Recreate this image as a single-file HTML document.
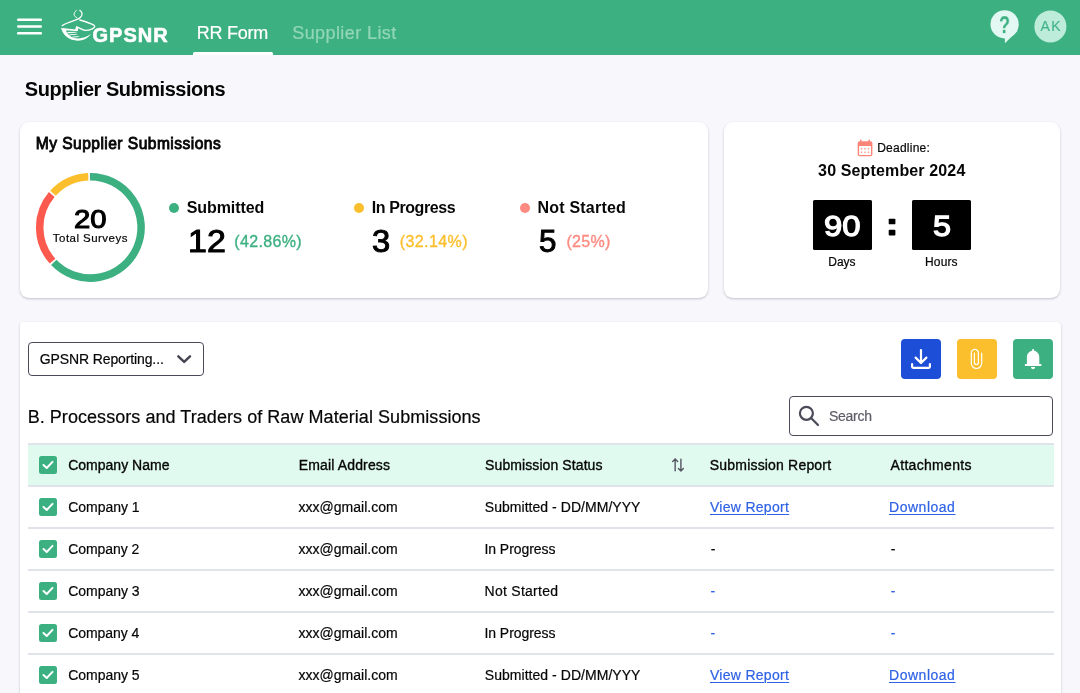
<!DOCTYPE html>
<html lang="en">
<head>
<meta charset="utf-8">
<title>Supplier Submissions</title>
<style>
*{box-sizing:border-box;margin:0;padding:0}
html,body{width:1080px;height:693px;overflow:hidden}
body{background:#F8F8FC;font-family:"Liberation Sans",sans-serif;color:#111;position:relative}
.abs{position:absolute}
#hdr{position:absolute;left:0;top:0;width:1080px;height:55px;background:#3DB081}
.card{position:absolute;background:#fff;border-radius:9px;box-shadow:0 1px 3px rgba(50,50,90,.16),0 1px 2px rgba(50,50,90,.12)}
.t{position:absolute;white-space:nowrap;line-height:1;-webkit-text-stroke:.2px currentColor}
.b{-webkit-text-stroke:0}
#tx{position:absolute;left:0;top:0;width:1080px;height:693px;will-change:transform}
svg text{will-change:transform}
.b{font-weight:bold}
.sb{-webkit-text-stroke:.35px currentColor}
.s10{-webkit-text-stroke:1px currentColor}
.s06{-webkit-text-stroke:.6px currentColor}
.s05{-webkit-text-stroke:.5px currentColor}
.xb{font-weight:bold;-webkit-text-stroke:.6px currentColor}
.lnk{text-decoration:underline;text-decoration-thickness:1px;text-underline-offset:2px}
.dot{position:absolute;width:10px;height:10px;border-radius:50%}
.hl{position:absolute;left:28px;width:1026px;height:2px;background:#E1E3EA}
.cb{position:absolute;left:39px;width:18px;height:18px}
.btn{position:absolute;top:339px;width:40px;height:40px;border-radius:4px}
</style>
</head>
<body>
<!-- HEADER -->
<div id="hdr"></div>
<svg class="abs" style="left:17px;top:18px" width="25" height="17" viewBox="0 0 25 17"><g fill="#fff"><rect x="0" y="0.4" width="25" height="2.5" rx="1.2"/><rect x="0" y="7.2" width="25" height="2.5" rx="1.2"/><rect x="0" y="14.1" width="25" height="2.5" rx="1.2"/></g></svg>
<svg class="abs" style="left:56px;top:5px" width="50" height="45" viewBox="0 0 50 45">
  <defs><linearGradient id="fg" x1="0" x2="1" y1="0" y2="0"><stop offset="0" stop-color="#fff"/><stop offset=".7" stop-color="#fff" stop-opacity=".85"/><stop offset="1" stop-color="#fff" stop-opacity=".15"/></linearGradient></defs>
  <g fill="none" stroke="#fff" stroke-linecap="round" stroke-linejoin="round">
    <path d="M20.4 5.4C18.6 6.8 17.6 8.6 18.3 10.3C18.8 11.5 19.8 12.3 20.8 12.8" stroke-width=".9"/>
    <path d="M23.8 5.3C25.6 6.6 26.6 8.6 25.6 10.8C24.8 12.4 23.5 13.3 22.3 13.9C20.5 14.8 14 16.9 11.4 18C9.5 18.8 7.5 19.8 6.2 20.6" stroke-width="1.25"/>
    <path d="M23.8 15C27 15.7 33 17.8 36.5 19.3C39.6 20.7 39.4 22.4 36.3 23.8C34 24.9 31 25.4 28.8 25.4" stroke-width="1.4"/>
  </g>
  <path d="M5.1 23.1C10 23.5 15 24.1 19.2 24.5L20.2 21C23 21.7 25.5 23.7 28.8 24.7L29 26C26.2 25.6 24 24.2 22 23.2L22 26C18 25.7 13 25.5 9.9 25.4C11.5 29 15 33.4 22.3 33.4C26.5 33.4 31.2 31.8 35 29.1C32 33.4 27 35.7 21.9 35.7C13 35.7 7 30.5 5.1 23.1Z" fill="#fff"/>
  <g fill="none" stroke="url(#fg)">
    <path d="M11.5 27.6L21.6 27.3" stroke-width="1.15"/>
    <path d="M13.6 29.8L22 29.3" stroke-width="1.05"/>
    <path d="M16.5 32L23.8 31.5" stroke-width="1"/>
  </g>
</svg>

<div class="abs" style="left:193px;top:52px;width:80px;height:3px;background:#fff;border-radius:1.5px 1.5px 0 0"></div>
<!-- help bubble -->
<svg class="abs" style="left:988px;top:8px;will-change:transform" width="80" height="38" viewBox="988 8 80 38">
  <circle cx="1050.4" cy="26.4" r="16" fill="#BEECDB"/>
  <circle cx="1004.6" cy="24.3" r="14.1" fill="#E3F8F2"/>
  <path d="M1004.9 36v7.3l13-12.8z" fill="#E3F8F2"/>
  <text transform="translate(1004.6 33.1) scale(.77 1)" text-anchor="middle" font-family="Liberation Sans, sans-serif" font-weight="bold" font-size="23.5" fill="#3DB081">?</text>
</svg>


<!-- CARDS -->
<div class="card" style="left:20px;top:122px;width:688px;height:176px"></div>
<div class="card" style="left:724px;top:122px;width:336px;height:176px"></div>
<div class="card" style="left:20px;top:322px;width:1041px;height:400px;border-radius:4px"></div>

<!-- donut -->
<svg class="abs" style="left:30px;top:167px" width="120" height="120" viewBox="30 167 120 120"><g fill="none" stroke-width="7.5"><path d="M90 176.7A50.7 50.7 0 1 1 53.75 262.43" stroke="#3DB081"/><path d="M52.55 261.13A50.7 50.7 0 0 1 51.79 194.54" stroke="#FC5A4E"/><path d="M52.96 193.21A50.7 50.7 0 0 1 88.28 176.74" stroke="#FBBF2D"/></g></svg>

<div class="dot" style="left:169px;top:203px;background:#3DB081"></div>
<div class="dot" style="left:354px;top:203px;background:#FBBF2D"></div>
<div class="dot" style="left:520px;top:203px;background:#FD8A80"></div>

<!-- calendar -->
<svg class="abs" style="left:856px;top:138px" width="18" height="20" viewBox="856 138 18 20">
  <g fill="#FC8478">
    <rect x="857.7" y="141.3" width="14.7" height="14.9" rx="2"/>
    <rect x="860" y="139.4" width="1.5" height="3.5" rx=".7"/>
    <rect x="868.5" y="139.4" width="1.5" height="3.5" rx=".7"/>
  </g>
  <rect x="859.1" y="146.1" width="11.9" height="8.9" rx=".6" fill="#fff"/>
  <g fill="#FC8478">
    <rect x="860.9" y="148.1" width="1.3" height="1.3"/><rect x="864.35" y="148.1" width="1.3" height="1.3"/><rect x="867.8" y="148.1" width="1.3" height="1.3"/>
    <rect x="860.9" y="151.6" width="1.3" height="1.3"/><rect x="864.35" y="151.6" width="1.3" height="1.3"/><rect x="867.8" y="151.6" width="1.3" height="1.3"/>
  </g>
</svg>
<div class="abs" style="left:813.2px;top:200px;width:58.8px;height:50px;background:#000;border-radius:1.5px"></div>
<div class="abs" style="left:912px;top:200px;width:58.8px;height:50px;background:#000;border-radius:1.5px"></div>
<svg class="abs" style="left:886px;top:216px" width="12" height="22" viewBox="886 216 12 22"><rect x="888.7" y="218.7" width="6.7" height="5.6" rx=".9" fill="#000"/><rect x="888.7" y="229.8" width="6.7" height="5.6" rx=".9" fill="#000"/></svg>

<!-- select -->
<div class="abs" style="left:28px;top:342px;width:176px;height:34px;border:1px solid #4A4A5A;border-radius:4px;background:#fff"></div>
<svg class="abs" style="left:175px;top:352px" width="18" height="14" viewBox="175 352 18 14"><path d="M178.3 356.3l5.85 5.6 5.85-5.6" fill="none" stroke="#44444F" stroke-width="2.4" stroke-linecap="round" stroke-linejoin="round"/></svg>

<!-- buttons -->
<div class="btn" style="left:901px;background:#1D4ED8"></div>
<div class="btn" style="left:957px;background:#FBBF2D"></div>
<div class="btn" style="left:1013px;background:#3DB081"></div>
<svg class="abs" style="left:901px;top:339px" width="152" height="40" viewBox="901 339 152 40">
  <g fill="none" stroke="#fff" stroke-linecap="round" stroke-linejoin="round">
    <path d="M921 350v12.3M915.6 357.6l5.4 5.4 5.4-5.4M912.1 364v2.8a1 1 0 0 0 1 1h15.8a1 1 0 0 0 1-1V364" stroke-width="2.2"/>
    <path d="M981.7 353.2V363.3A5.2 5.2 0 0 1 971.3 363.3V353A3.55 3.55 0 0 1 978.4 353V362.5A2 2 0 0 1 974.4 362.5V353.2" stroke-width="1.2"/>
  </g>
  <g fill="#fff">
    <path d="M1033.1 349a1 1 0 0 1 1 1v.7c3 .6 5.2 3.1 5.2 6.3v7.1h-12.4v-7.1c0-3.2 2.2-5.7 5.2-6.3v-.7a1 1 0 0 1 1-1z"/>
    <rect x="1024.9" y="364.1" width="16.4" height="1.9" rx=".3"/>
    <path d="M1030.9 367.1h4.3a2.15 2.15 0 0 1-4.3 0z"/>
  </g>
</svg>

<!-- search -->
<div class="abs" style="left:789px;top:396px;width:264px;height:40px;border:1px solid #4A4A5A;border-radius:4px;background:#fff"></div>
<svg class="abs" style="left:797px;top:404px" width="24" height="24" viewBox="797 404 24 24"><g fill="none" stroke="#4A4A58" stroke-width="2.2" stroke-linecap="round"><circle cx="806.4" cy="413.3" r="6.5"/><path d="M811.3 418.3l6.7 6.7"/></g></svg>

<!-- table -->
<div class="abs" style="left:28px;top:445px;width:1026px;height:40px;background:#E0FAF0"></div>
<div class="hl" style="top:443px"></div>
<div class="hl" style="top:485px"></div>
<div class="hl" style="top:527px"></div>
<div class="hl" style="top:569px"></div>
<div class="hl" style="top:611px"></div>
<div class="hl" style="top:653px"></div>
<svg class="abs" style="left:670px;top:456px" width="18" height="18" viewBox="670 456 18 18"><path d="M675.15 470.8V459M672.7 461.4l2.45-2.5 2.45 2.5M680.9 459.2V471M678.45 468.6l2.45 2.5 2.45-2.5" fill="none" stroke="#555561" stroke-width="1.4" stroke-linecap="round" stroke-linejoin="round"/></svg>
<svg class="cb" style="top:456px" viewBox="0 0 18 18"><rect width="18" height="18" rx="2.5" fill="#3DB081"/><path d="M4.5 9l3.2 3 5.8-6.1" fill="none" stroke="#fff" stroke-width="2" stroke-linecap="round" stroke-linejoin="round"/></svg>
<svg class="cb" style="top:498px" viewBox="0 0 18 18"><rect width="18" height="18" rx="2.5" fill="#3DB081"/><path d="M4.5 9l3.2 3 5.8-6.1" fill="none" stroke="#fff" stroke-width="2" stroke-linecap="round" stroke-linejoin="round"/></svg>
<svg class="cb" style="top:540px" viewBox="0 0 18 18"><rect width="18" height="18" rx="2.5" fill="#3DB081"/><path d="M4.5 9l3.2 3 5.8-6.1" fill="none" stroke="#fff" stroke-width="2" stroke-linecap="round" stroke-linejoin="round"/></svg>
<svg class="cb" style="top:582px" viewBox="0 0 18 18"><rect width="18" height="18" rx="2.5" fill="#3DB081"/><path d="M4.5 9l3.2 3 5.8-6.1" fill="none" stroke="#fff" stroke-width="2" stroke-linecap="round" stroke-linejoin="round"/></svg>
<svg class="cb" style="top:624px" viewBox="0 0 18 18"><rect width="18" height="18" rx="2.5" fill="#3DB081"/><path d="M4.5 9l3.2 3 5.8-6.1" fill="none" stroke="#fff" stroke-width="2" stroke-linecap="round" stroke-linejoin="round"/></svg>
<svg class="cb" style="top:666px" viewBox="0 0 18 18"><rect width="18" height="18" rx="2.5" fill="#3DB081"/><path d="M4.5 9l3.2 3 5.8-6.1" fill="none" stroke="#fff" stroke-width="2" stroke-linecap="round" stroke-linejoin="round"/></svg>

<div id="tx">
<div class="t xb" id="gpsnr" style="left:92.48px;top:25.01px;font-size:20px;color:#fff;letter-spacing:1.01px;">GPSNR</div>
<div class="t" id="rrform" style="left:196.64px;top:24.01px;font-size:18px;color:#fff;letter-spacing:-0.224px;">RR Form</div>
<div class="t" id="suplist" style="left:292.22px;top:24.01px;font-size:18px;color:#93D6B9;letter-spacing:0.415px;">Supplier List</div>
<div class="t" id="ak" style="left:1040.6px;top:19.01px;font-size:14px;color:#45B488;letter-spacing:1.286px;">AK</div>
<div class="t b" id="title" style="left:24.84px;top:79px;font-size:20px;color:#060606;letter-spacing:-0.491px;">Supplier Submissions</div>
<div class="t" id="mysup" style="left:35.7px;top:136.01px;font-size:15.6px;color:#060606;letter-spacing:0.454px;-webkit-text-stroke:.85px currentColor;">My Supplier Submissions</div>
<div class="t" id="n20" style="left:74.46px;top:206px;font-size:26px;color:#000;transform-origin:0 0;transform:scaleX(1.1263);-webkit-text-stroke:1.1px currentColor;">20</div>
<div class="t" id="totsur" style="left:52.83px;top:233.01px;font-size:11.5px;color:#060606;letter-spacing:0.462px;">Total Surveys</div>
<div class="t b" id="lsub" style="left:186.64px;top:200px;font-size:16px;color:#060606;letter-spacing:-0.058px;">Submitted</div>
<div class="t s10" id="n12" style="left:187.66px;top:226.01px;font-size:31.5px;color:#000;transform-origin:0 0;transform:scaleX(1.0796);">12</div>
<div class="t" id="p12" style="left:234.26px;top:234.01px;font-size:16px;color:#3DB081;letter-spacing:0.351px;-webkit-text-stroke:.35px currentColor;">(42.86%)</div>
<div class="t b" id="linp" style="left:371.81px;top:200px;font-size:16px;color:#060606;letter-spacing:-0.418px;">In Progress</div>
<div class="t s10" id="n3" style="left:371.99px;top:226.01px;font-size:31.5px;color:#000;transform-origin:0 0;transform:scaleX(1.0397);">3</div>
<div class="t" id="p3" style="left:399.7px;top:234.01px;font-size:16px;color:#FBBF2D;letter-spacing:0.414px;-webkit-text-stroke:.35px currentColor;">(32.14%)</div>
<div class="t b" id="lnot" style="left:537.55px;top:200px;font-size:16px;color:#060606;letter-spacing:0.203px;">Not Started</div>
<div class="t s10" id="n5" style="left:538.74px;top:226.01px;font-size:31.5px;color:#000;transform-origin:0 0;transform:scaleX(0.9948);">5</div>
<div class="t" id="p5" style="left:566.41px;top:234.01px;font-size:16px;color:#FD8A80;letter-spacing:0.339px;-webkit-text-stroke:.35px currentColor;">(25%)</div>
<div class="t" id="deadl" style="left:877.22px;top:142.01px;font-size:12px;color:#060606;letter-spacing:0.233px;">Deadline:</div>
<div class="t b" id="date" style="left:818.12px;top:163px;font-size:16px;color:#060606;letter-spacing:0.139px;">30 September 2024</div>
<div class="t" id="n90" style="left:823.55px;top:211px;font-size:30.3px;color:#fff;transform-origin:0 0;transform:scaleX(1.0849);-webkit-text-stroke:1.3px currentColor;">90</div>
<div class="t" id="n5h" style="left:932.5px;top:211px;font-size:30.3px;color:#fff;transform-origin:0 0;transform:scaleX(1.0713);-webkit-text-stroke:1.3px currentColor;">5</div>
<div class="t" id="days" style="left:828.21px;top:256.01px;font-size:12px;color:#060606;letter-spacing:0.01px;">Days</div>
<div class="t" id="hours" style="left:925.08px;top:256.01px;font-size:12px;color:#060606;letter-spacing:0.128px;">Hours</div>
<div class="t" id="sel" style="left:39.76px;top:352px;font-size:14px;color:#060606;letter-spacing:-0.117px;">GPSNR Reporting...</div>
<div class="t" id="bhead" style="left:27.65px;top:408.01px;font-size:18px;color:#060606;letter-spacing:0.054px;">B. Processors and Traders of Raw Material Submissions</div>
<div class="t" id="search" style="left:828.93px;top:409px;font-size:14px;color:#5C5C68;letter-spacing:-0.273px;">Search</div>
<div class="t sb" id="h1" style="left:68.15px;top:458px;font-size:14px;color:#060606;letter-spacing:0.017px;">Company Name</div>
<div class="t sb" id="h2" style="left:298.7px;top:458px;font-size:14px;color:#060606;letter-spacing:0.15px;">Email Address</div>
<div class="t sb" id="h3" style="left:485.1px;top:458px;font-size:14px;color:#060606;letter-spacing:0.091px;">Submission Status</div>
<div class="t sb" id="h4" style="left:709.85px;top:458px;font-size:14px;color:#060606;letter-spacing:0.184px;">Submission Report</div>
<div class="t sb" id="h5" style="left:890.58px;top:458px;font-size:14px;color:#060606;letter-spacing:0.304px;">Attachments</div>
<div class="t" id="c1" style="left:68.24px;top:500.01px;font-size:14px;color:#060606;letter-spacing:-0.021px;">Company 1</div>
<div class="t" id="e1" style="left:298.55px;top:500.01px;font-size:14px;color:#060606;letter-spacing:0.005px;">xxx@gmail.com</div>
<div class="t" id="s1" style="left:484.75px;top:500.01px;font-size:14px;color:#060606;letter-spacing:0.044px;">Submitted - DD/MM/YYY</div>
<div class="t lnk" id="v1" style="left:710.01px;top:500.01px;font-size:14px;color:#2F62E4;letter-spacing:0.282px;">View Report</div>
<div class="t lnk" id="d1" style="left:889.03px;top:500.01px;font-size:14px;color:#2F62E4;letter-spacing:0.517px;">Download</div>
<div class="t" id="c2" style="left:68.24px;top:542.01px;font-size:14px;color:#060606;letter-spacing:-0.063px;">Company 2</div>
<div class="t" id="e2" style="left:298.55px;top:542.01px;font-size:14px;color:#060606;letter-spacing:0.005px;">xxx@gmail.com</div>
<div class="t" id="s2" style="left:484.44px;top:542.01px;font-size:14px;color:#060606;letter-spacing:-0.046px;">In Progress</div>
<div class="t" id="v2" style="left:710.77px;top:542.01px;font-size:14px;color:#060606;">-</div>
<div class="t" id="d2" style="left:890.66px;top:542.01px;font-size:14px;color:#060606;">-</div>
<div class="t" id="c3" style="left:68.24px;top:584.01px;font-size:14px;color:#060606;letter-spacing:-0.032px;">Company 3</div>
<div class="t" id="e3" style="left:298.55px;top:584.01px;font-size:14px;color:#060606;letter-spacing:0.005px;">xxx@gmail.com</div>
<div class="t" id="s3" style="left:484.51px;top:584.01px;font-size:14px;color:#060606;letter-spacing:0.273px;">Not Started</div>
<div class="t" id="v3" style="left:710.62px;top:584.01px;font-size:14px;color:#2F62E4;">-</div>
<div class="t" id="d3" style="left:890.87px;top:584.01px;font-size:14px;color:#2F62E4;">-</div>
<div class="t" id="c4" style="left:68.24px;top:626.01px;font-size:14px;color:#060606;letter-spacing:-0.08px;">Company 4</div>
<div class="t" id="e4" style="left:298.55px;top:626.01px;font-size:14px;color:#060606;letter-spacing:0.005px;">xxx@gmail.com</div>
<div class="t" id="s4" style="left:484.44px;top:626.01px;font-size:14px;color:#060606;letter-spacing:-0.046px;">In Progress</div>
<div class="t" id="v4" style="left:710.62px;top:626.01px;font-size:14px;color:#2F62E4;">-</div>
<div class="t" id="d4" style="left:890.87px;top:626.01px;font-size:14px;color:#2F62E4;">-</div>
<div class="t" id="c5" style="left:68.24px;top:668.01px;font-size:14px;color:#060606;letter-spacing:-0.038px;">Company 5</div>
<div class="t" id="e5" style="left:298.55px;top:668.01px;font-size:14px;color:#060606;letter-spacing:0.005px;">xxx@gmail.com</div>
<div class="t" id="s5" style="left:484.75px;top:668.01px;font-size:14px;color:#060606;letter-spacing:0.044px;">Submitted - DD/MM/YYY</div>
<div class="t lnk" id="v5" style="left:710.01px;top:668.01px;font-size:14px;color:#2F62E4;letter-spacing:0.282px;">View Report</div>
<div class="t lnk" id="d5" style="left:889.03px;top:668.01px;font-size:14px;color:#2F62E4;letter-spacing:0.517px;">Download</div>
</div>
</body>
</html>
